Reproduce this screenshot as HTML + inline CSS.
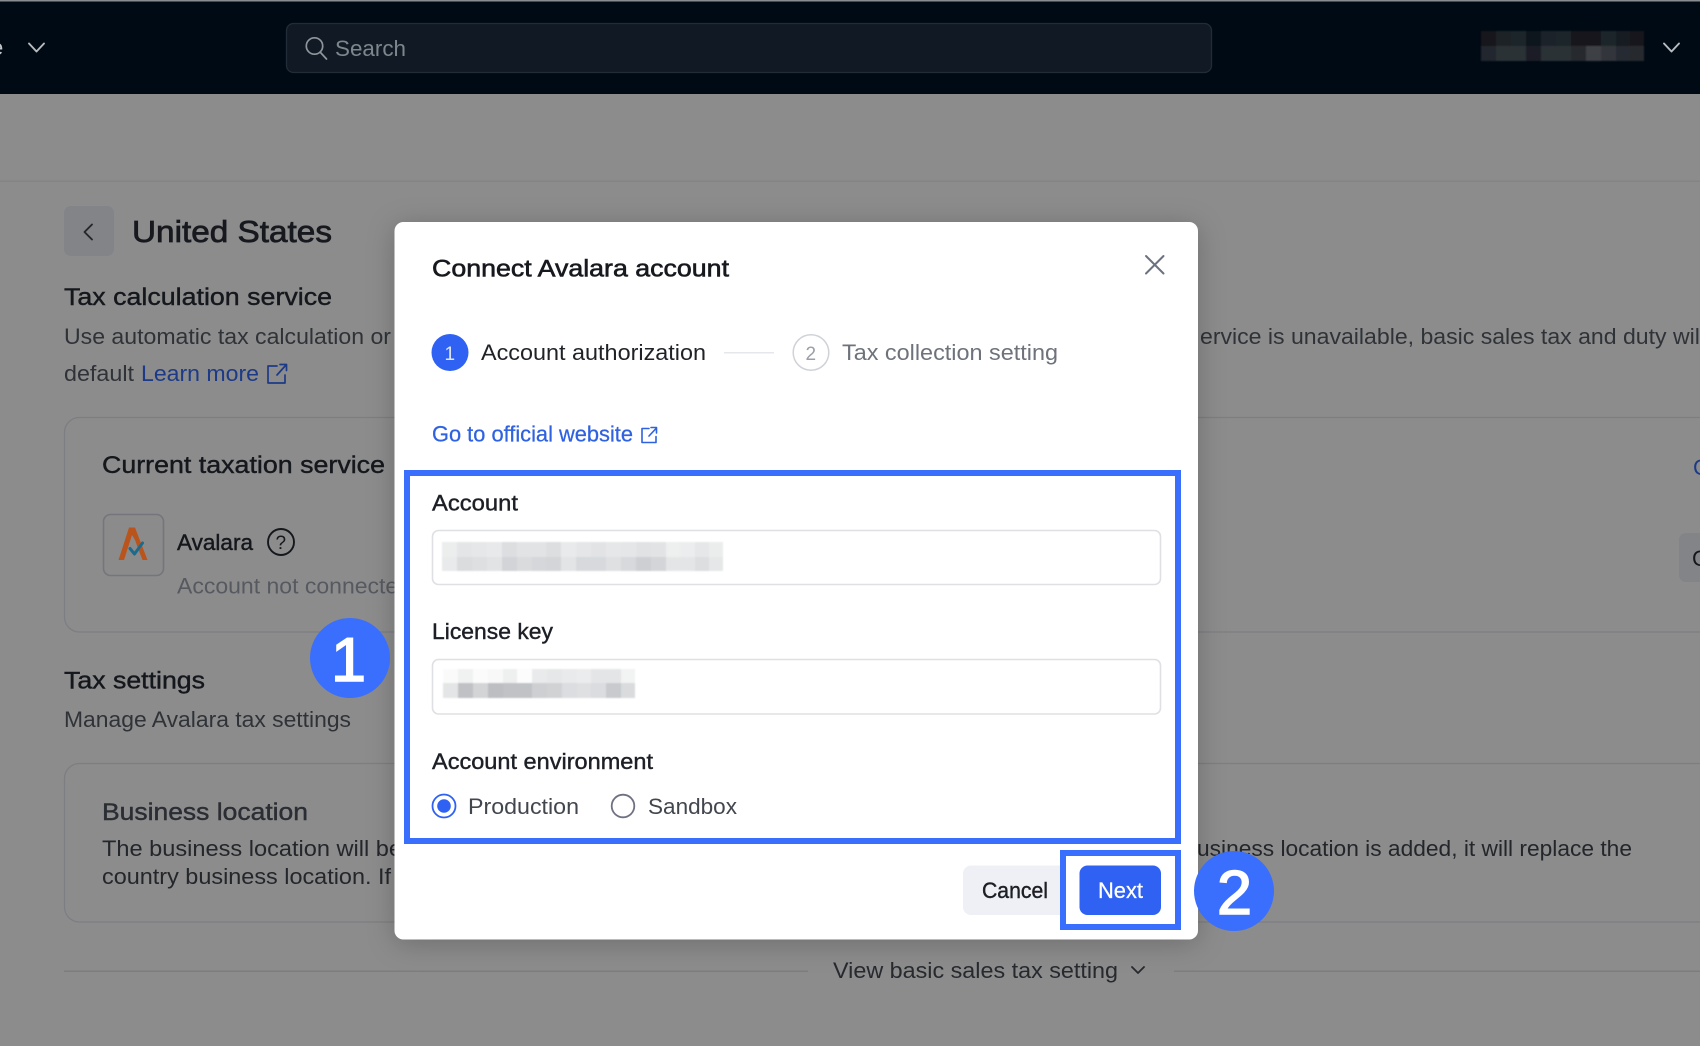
<!DOCTYPE html>
<html lang="en"><head><meta charset="utf-8"><title>Connect Avalara account</title>
<style>
html,body{margin:0;padding:0;background:#8c8c8c;width:1700px;height:1046px;overflow:hidden}
svg{display:block;position:absolute;left:0;top:0}
text{font-family:"Liberation Sans",sans-serif;font-size:22px;fill:#2f3338}
.m{stroke-width:.4px;paint-order:stroke}
.d{fill:#14171c;stroke:#14171c}
.s{fill:#17191e;stroke:#17191e;stroke-width:.75px}
.k{fill:#1c1f25;stroke:#1c1f25}
.i{fill:none;stroke-linecap:round;stroke-linejoin:round}
</style></head><body>
<svg width="1700" height="1046" viewBox="0 0 1700 1046">
<defs><filter id="sh" x="-10%" y="-10%" width="120%" height="120%"><feDropShadow dx="0" dy="4" stdDeviation="14" flood-color="#000" flood-opacity=".22"/></filter>
<filter id="b" x="-5%" y="-5%" width="110%" height="110%"><feGaussianBlur stdDeviation=".7"/></filter></defs>

<!-- header -->
<rect width="1700" height="94" fill="#000a14"/>
<rect width="1700" height="1.5" fill="#8a8d90"/>
<text x="-9" y="55" fill="#c4c7ca" style="fill:#c4c7ca">e</text>
<path class="i" d="M29 43.5l7.5 8 7.500-8" stroke="#b9bcbf" stroke-width="1.9"/>
<rect x="286.500" y="23.500" width="925" height="49" rx="7" fill="#111a24" stroke="#222c38" stroke-width="1.3"/>
<circle cx="314.500" cy="46" r="8.200" class="i" stroke="#8f959b" stroke-width="1.7"/>
<path class="i" d="M320.500 52.500l6 6.500" stroke="#8f959b" stroke-width="1.7"/>
<text x="335" y="56" textLength="71" lengthAdjust="spacingAndGlyphs" style="fill:#7f858c">Search</text>
<g filter="url(#b)">
<rect x="1481" y="31" width="15" height="15" fill="#12181f"/><rect x="1496" y="31" width="15" height="15" fill="#1a2027"/><rect x="1511" y="31" width="15" height="15" fill="#1f252c"/><rect x="1526" y="31" width="15" height="15" fill="#0f141b"/><rect x="1541" y="31" width="15" height="15" fill="#1e242b"/><rect x="1556" y="31" width="15" height="15" fill="#1f252c"/><rect x="1571" y="31" width="15" height="15" fill="#12181f"/><rect x="1586" y="31" width="15" height="15" fill="#12181f"/><rect x="1601" y="31" width="15" height="15" fill="#1f252c"/><rect x="1616" y="31" width="14" height="15" fill="#151a21"/><rect x="1630" y="31" width="14" height="15" fill="#12171e"/>
<rect x="1481" y="46" width="15" height="15" fill="#23282e"/><rect x="1496" y="46" width="15" height="15" fill="#2c3136"/><rect x="1511" y="46" width="15" height="15" fill="#2c3136"/><rect x="1526" y="46" width="15" height="15" fill="#1a1f26"/><rect x="1541" y="46" width="15" height="15" fill="#2b3035"/><rect x="1556" y="46" width="15" height="15" fill="#2b3035"/><rect x="1571" y="46" width="15" height="15" fill="#25292f"/><rect x="1586" y="46" width="15" height="15" fill="#3c4045"/><rect x="1601" y="46" width="15" height="15" fill="#30343a"/><rect x="1616" y="46" width="14" height="15" fill="#272b31"/><rect x="1630" y="46" width="14" height="15" fill="#25292f"/>
</g>
<path class="i" d="M1664 43.500l7.500 8 7.500-8" stroke="#b9bcbf" stroke-width="1.9"/>

<!-- page behind -->
<rect y="180.500" width="1700" height="1.3" fill="#838384"/>
<rect x="64" y="206" width="50" height="50" rx="7" fill="#838488"/>
<path class="i" d="M92 224.500l-7.500 7.500 7.500 7.500" stroke="#24272c" stroke-width="1.9"/>
<text x="132" y="242" style="font-size:31px" textLength="200" lengthAdjust="spacingAndGlyphs" class="s">United States</text>
<text x="64" y="305" style="font-size:24px" textLength="268" lengthAdjust="spacingAndGlyphs" class="m d">Tax calculation service</text>
<text x="64" y="344" textLength="327" lengthAdjust="spacingAndGlyphs">Use automatic tax calculation or</text>
<text x="1200" y="344" textLength="505" lengthAdjust="spacingAndGlyphs">ervice is unavailable, basic sales tax and duty will</text>
<text x="64" y="381" textLength="70" lengthAdjust="spacingAndGlyphs">default</text>
<text x="141" y="381" textLength="118" lengthAdjust="spacingAndGlyphs" style="fill:#1c3a87">Learn more</text>
<path class="i" d="M277 366h-9v17h17v-8M277 375l9-10M280 364.500h6.500v6" stroke="#1c3a87" stroke-width="1.7"/>

<rect x="64.500" y="417.500" width="1700" height="214.500" rx="15" fill="none" stroke="#7d7e82" stroke-width="1.3"/>
<text x="102" y="473" style="font-size:24px" textLength="283" lengthAdjust="spacingAndGlyphs" class="m d">Current taxation service</text>
<rect x="103.500" y="514.500" width="60" height="61" rx="7" fill="#8b8b8c" stroke="#74767c" stroke-width="1.6"/>
<path d="M118.500 560l10.500-32.500h6l12.500 32.500h-5l-3.500-9-4-11-3-5-8 25z" fill="#b9551c"/>
<path class="i" d="M130 548.500l4.500 5.500 8-11" stroke="#1d6a8d" stroke-width="3"/>
<text x="177" y="550" textLength="76" lengthAdjust="spacingAndGlyphs" class="m d">Avalara</text>
<circle cx="281" cy="542" r="13" class="i" stroke="#14171c" stroke-width="1.9"/>
<text x="275.500" y="549" style="font-size:19px;fill:#14171c">?</text>
<text x="177" y="593.500" textLength="234" lengthAdjust="spacingAndGlyphs" style="fill:#565a60">Account not connected</text>
<rect x="1679" y="533" width="40" height="49" rx="7" fill="#838488"/>
<text x="1692" y="566" style="fill:#14171c">C</text>
<text x="1693" y="475" style="fill:#1c3a87">C</text>

<text x="64" y="688.500" style="font-size:24px" textLength="141" lengthAdjust="spacingAndGlyphs" class="m d">Tax settings</text>
<text x="64" y="727" textLength="287" lengthAdjust="spacingAndGlyphs">Manage Avalara tax settings</text>
<rect x="64.500" y="763.500" width="1700" height="158.500" rx="15" fill="none" stroke="#7d7e82" stroke-width="1.3"/>
<text x="102" y="820" style="font-size:24px;fill:#2a2d33;stroke:#2a2d33" textLength="206" lengthAdjust="spacingAndGlyphs" class="m">Business location</text>
<text x="102" y="856" textLength="300" lengthAdjust="spacingAndGlyphs" style="fill:#23262b">The business location will be</text>
<text x="102" y="884" textLength="289" lengthAdjust="spacingAndGlyphs" style="fill:#23262b">country business location. If</text>
<text x="1197" y="856" textLength="435" lengthAdjust="spacingAndGlyphs" style="fill:#23262b">usiness location is added, it will replace the</text>

<rect x="64" y="970.500" width="744" height="1.4" fill="#7b7c80"/>
<rect x="1174" y="970.500" width="526" height="1.4" fill="#7b7c80"/>
<text x="833" y="978" textLength="285" lengthAdjust="spacingAndGlyphs" style="fill:#26292e">View basic sales tax setting</text>
<path class="i" d="M1132 967l6 6 6-6" stroke="#26292e" stroke-width="1.800"/>

<!-- modal -->
<rect x="394.500" y="222" width="803.500" height="717.500" rx="9" fill="#fff" filter="url(#sh)"/>
<text x="432" y="276.500" style="font-size:24.500px;fill:#17191e;stroke:#17191e;stroke-width:.6px" textLength="297" lengthAdjust="spacingAndGlyphs">Connect Avalara account</text>
<path class="i" d="M1146 256l17.500 17.500M1163.500 256L1146 273.500" stroke="#6a7280" stroke-width="2"/>

<circle cx="450" cy="352.500" r="18.500" fill="#2f62f3"/>
<text x="444.500" y="360" style="font-size:19px;fill:#dfe6fc">1</text>
<text x="481" y="360" textLength="225" lengthAdjust="spacingAndGlyphs" style="fill:#1f2227">Account authorization</text>
<rect x="724" y="352" width="50" height="1.500" fill="#e6e7ea"/>
<circle cx="811" cy="352.500" r="17.800" fill="none" stroke="#cfd2d7" stroke-width="1.500"/>
<text x="805.500" y="360" style="font-size:19px;fill:#9a9fa7">2</text>
<text x="842" y="360" textLength="216" lengthAdjust="spacingAndGlyphs" style="fill:#6d727b">Tax collection setting</text>

<text x="432" y="441.500" textLength="201" lengthAdjust="spacingAndGlyphs" style="fill:#2f62e0;stroke:#2f62e0;stroke-width:.25px">Go to official website</text>
<path class="i" d="M649 428.500h-7v14h14v-6M649 436l7.500-8M651 427.500h5.500v5.500" stroke="#2f62e0" stroke-width="1.600"/>

<text x="432" y="510.500" textLength="86" lengthAdjust="spacingAndGlyphs" class="m k">Account</text>
<rect x="432.500" y="530.500" width="728" height="54" rx="6" fill="#fff" stroke="#dfe0e4" stroke-width="1.600"/>
<g filter="url(#b)">
<rect x="442" y="542" width="15" height="15" fill="#eceded"/><rect x="457" y="542" width="15" height="15" fill="#e4e5e7"/><rect x="472" y="542" width="15" height="15" fill="#e6e7e8"/><rect x="487" y="542" width="15" height="15" fill="#e8e9ea"/><rect x="502" y="542" width="15" height="15" fill="#dcdee0"/><rect x="517" y="542" width="15" height="15" fill="#e2e3e5"/><rect x="532" y="542" width="14" height="15" fill="#e2e3e5"/><rect x="546" y="542" width="15" height="15" fill="#dcdee0"/><rect x="561" y="542" width="15" height="15" fill="#e9eaeb"/><rect x="576" y="542" width="15" height="15" fill="#e5e6e8"/><rect x="591" y="542" width="15" height="15" fill="#e2e3e5"/><rect x="606" y="542" width="15" height="15" fill="#e6e7e8"/><rect x="621" y="542" width="15" height="15" fill="#e5e6e8"/><rect x="636" y="542" width="15" height="15" fill="#e0e2e4"/><rect x="651" y="542" width="15" height="15" fill="#e2e3e5"/><rect x="666" y="542" width="14" height="15" fill="#eeefef"/><rect x="680" y="542" width="15" height="15" fill="#ecedee"/><rect x="695" y="542" width="14" height="15" fill="#e6e7e8"/><rect x="709" y="542" width="14" height="15" fill="#ebeded"/>
<rect x="442" y="557" width="15" height="14" fill="#e9eaeb"/><rect x="457" y="557" width="15" height="14" fill="#dadcde"/><rect x="472" y="557" width="15" height="14" fill="#dddfe1"/><rect x="487" y="557" width="15" height="14" fill="#e2e3e5"/><rect x="502" y="557" width="15" height="14" fill="#d2d4d7"/><rect x="517" y="557" width="15" height="14" fill="#d9dbdd"/><rect x="532" y="557" width="14" height="14" fill="#d5d7da"/><rect x="546" y="557" width="15" height="14" fill="#d3d5d8"/><rect x="561" y="557" width="15" height="14" fill="#e3e4e6"/><rect x="576" y="557" width="15" height="14" fill="#d7d9dc"/><rect x="591" y="557" width="15" height="14" fill="#d7d9dc"/><rect x="606" y="557" width="15" height="14" fill="#dee0e2"/><rect x="621" y="557" width="15" height="14" fill="#d7d9dc"/><rect x="636" y="557" width="15" height="14" fill="#cdcfd3"/><rect x="651" y="557" width="15" height="14" fill="#d3d5d8"/><rect x="666" y="557" width="14" height="14" fill="#e4e5e7"/><rect x="680" y="557" width="15" height="14" fill="#e4e5e7"/><rect x="695" y="557" width="14" height="14" fill="#dcdee0"/><rect x="709" y="557" width="14" height="14" fill="#e6e7e8"/>
</g>

<text x="432" y="639" textLength="121" lengthAdjust="spacingAndGlyphs" class="m k">License key</text>
<rect x="432.500" y="659.500" width="728" height="54.500" rx="6" fill="#fff" stroke="#dfe0e4" stroke-width="1.600"/>
<g filter="url(#b)">
<rect x="443" y="669" width="15" height="14" fill="#fafafa"/><rect x="458" y="669" width="15" height="14" fill="#f0f1f1"/><rect x="473" y="669" width="15" height="14" fill="#fbfbfb"/><rect x="488" y="669" width="15" height="14" fill="#f8f8f8"/><rect x="503" y="669" width="14" height="14" fill="#eeefef"/><rect x="517" y="669" width="15" height="14" fill="#fcfcfc"/><rect x="532" y="669" width="15" height="14" fill="#e9eaeb"/><rect x="547" y="669" width="15" height="14" fill="#e6e7e8"/><rect x="562" y="669" width="15" height="14" fill="#e9eaeb"/><rect x="577" y="669" width="14" height="14" fill="#ebeced"/><rect x="591" y="669" width="15" height="14" fill="#e4e5e7"/><rect x="606" y="669" width="15" height="14" fill="#e4e5e7"/><rect x="621" y="669" width="14" height="14" fill="#f2f3f3"/>
<rect x="443" y="683" width="15" height="15" fill="#e4e5e6"/><rect x="458" y="683" width="15" height="15" fill="#bfc1c4"/><rect x="473" y="683" width="15" height="15" fill="#d2d4d6"/><rect x="488" y="683" width="15" height="15" fill="#bcbec2"/><rect x="503" y="683" width="14" height="15" fill="#c0c2c5"/><rect x="517" y="683" width="15" height="15" fill="#c0c2c5"/><rect x="532" y="683" width="15" height="15" fill="#cdcfd2"/><rect x="547" y="683" width="15" height="15" fill="#d0d2d4"/><rect x="562" y="683" width="15" height="15" fill="#dcdde0"/><rect x="577" y="683" width="14" height="15" fill="#dfe0e2"/><rect x="591" y="683" width="15" height="15" fill="#dadce0"/><rect x="606" y="683" width="15" height="15" fill="#c8cacd"/><rect x="621" y="683" width="14" height="15" fill="#d9dbdd"/>
</g>

<text x="432" y="769" textLength="221" lengthAdjust="spacingAndGlyphs" class="m k">Account environment</text>
<circle cx="444" cy="806" r="11.500" fill="#fff" stroke="#2f62f3" stroke-width="1.800"/>
<circle cx="444" cy="806" r="6.800" fill="#2f62f3"/>
<text x="468" y="814" textLength="111" lengthAdjust="spacingAndGlyphs" style="fill:#42464d">Production</text>
<circle cx="623" cy="806" r="11.300" fill="#fff" stroke="#6e7182" stroke-width="1.800"/>
<text x="648" y="814" textLength="89" lengthAdjust="spacingAndGlyphs" style="fill:#42464d">Sandbox</text>

<rect x="963" y="865.500" width="110" height="49.500" rx="8" fill="#eef0f6"/>
<text x="982" y="898" textLength="66" lengthAdjust="spacingAndGlyphs" class="m k">Cancel</text>
<rect x="1063" y="853" width="115" height="74" fill="#fff" stroke="#3a6efc" stroke-width="6"/>
<rect x="1079.500" y="865.500" width="81.500" height="49.500" rx="8" fill="#2f62f3"/>
<text x="1098" y="898" textLength="45" lengthAdjust="spacingAndGlyphs" style="fill:#fff;stroke:#fff;stroke-width:.25px">Next</text>

<rect x="407" y="473" width="771" height="368" fill="none" stroke="#3a6efc" stroke-width="6"/>

<circle cx="350" cy="658" r="40" fill="#3a6efc"/>
<text x="331" y="681" style="font-size:62px;fill:#fff;stroke:#fff;stroke-width:1.6px" textLength="35" lengthAdjust="spacingAndGlyphs">1</text>
<circle cx="1234" cy="891" r="40" fill="#3a6efc"/>
<text x="1217" y="914" style="font-size:62px;fill:#fff;stroke:#fff;stroke-width:1.6px" textLength="35" lengthAdjust="spacingAndGlyphs">2</text>
</svg>
</body></html>
